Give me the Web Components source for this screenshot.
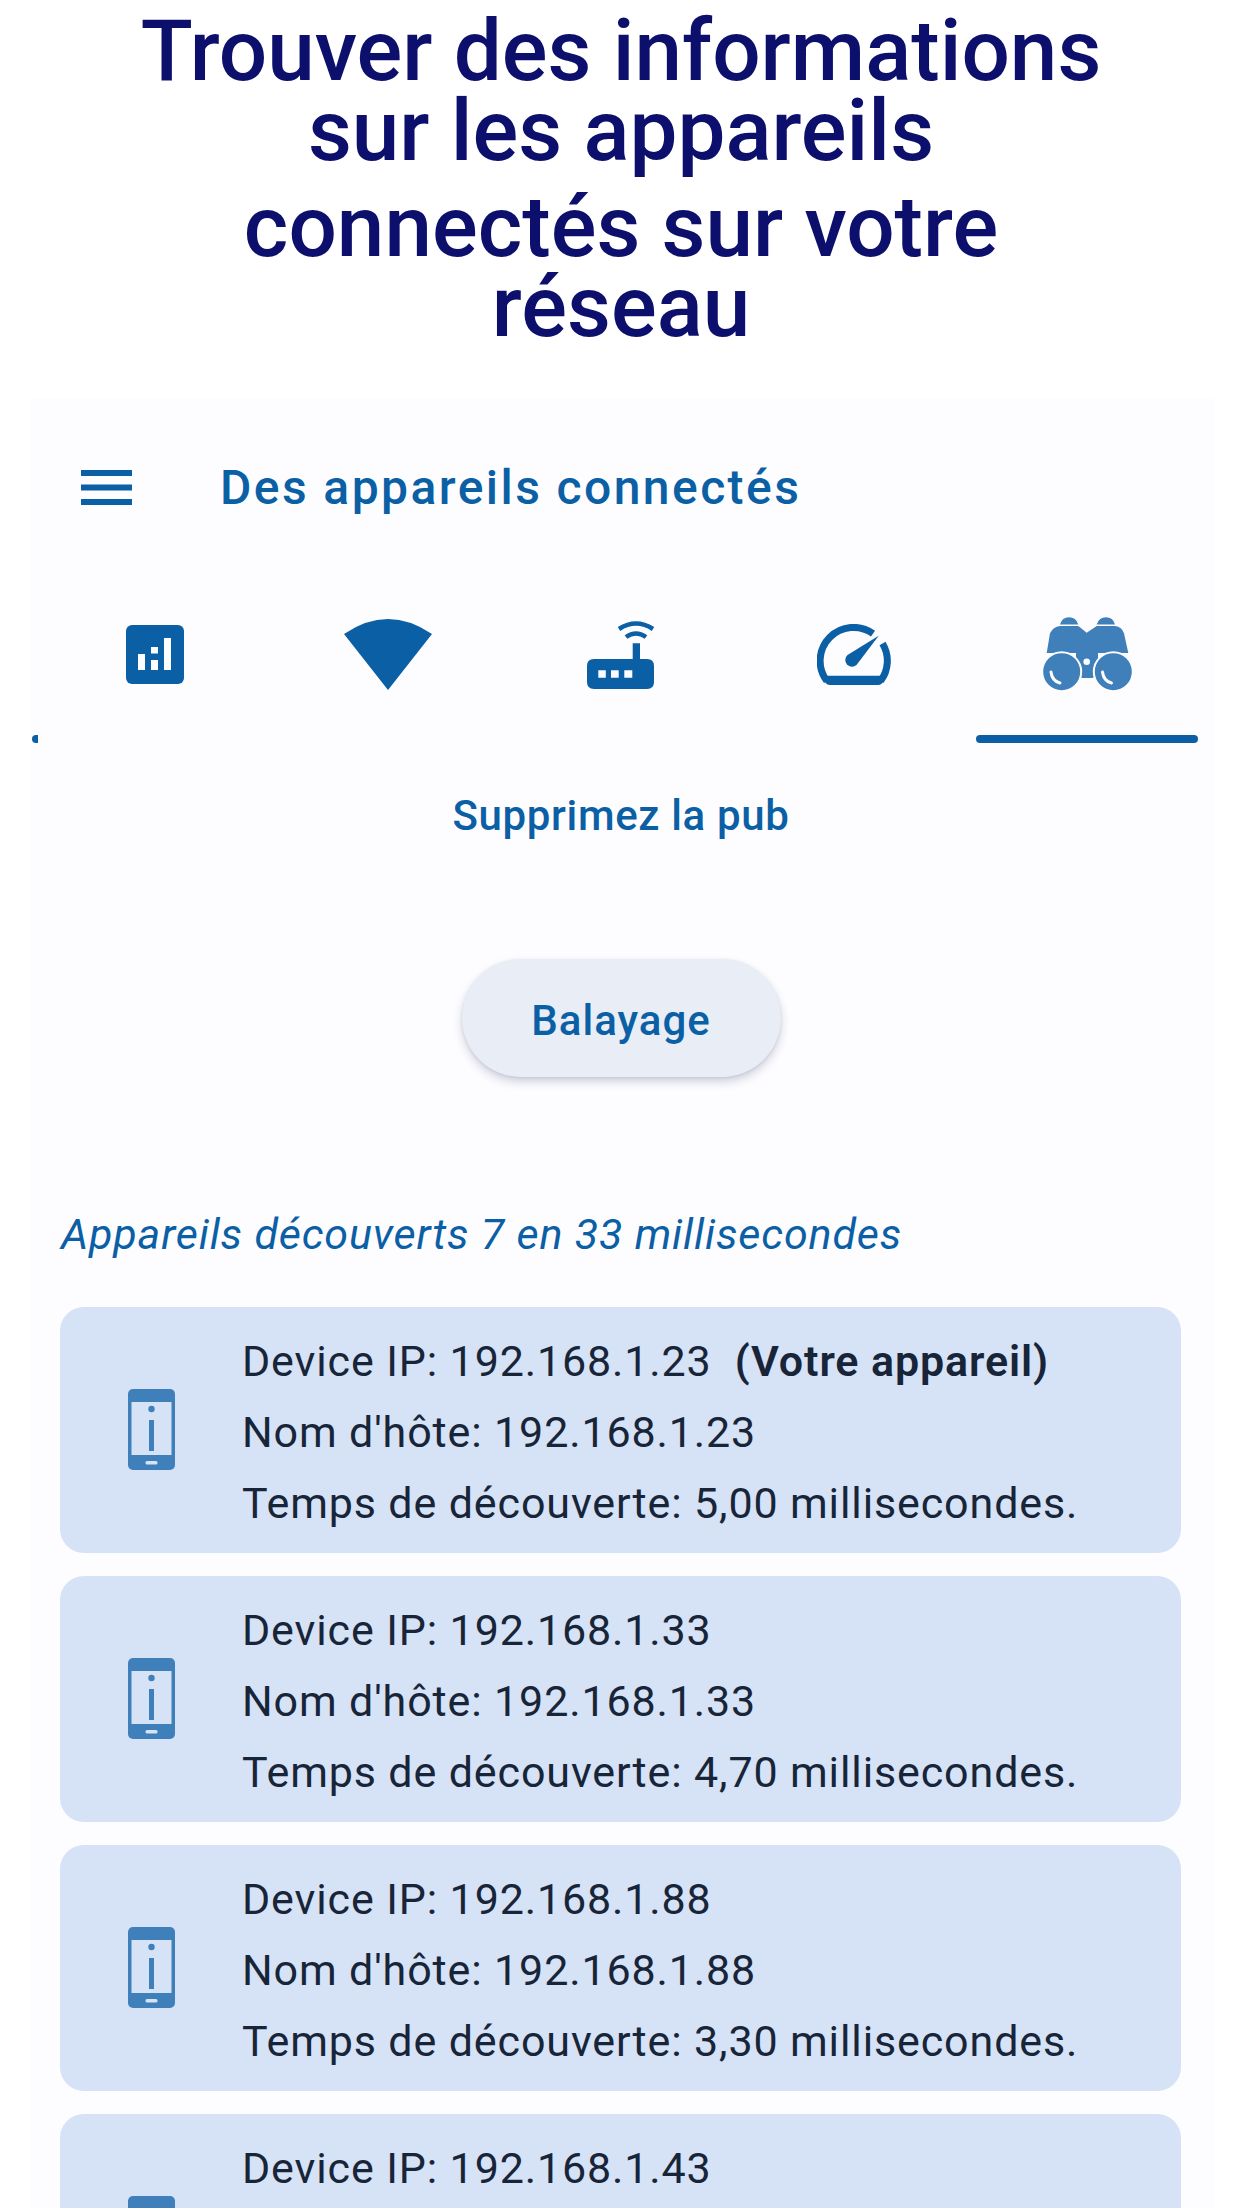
<!DOCTYPE html>
<html lang="fr">
<head>
<meta charset="utf-8">
<title>Des appareils connectés</title>
<style>
  html, body { margin: 0; padding: 0; background: #fff; }
  body { width: 1242px; height: 2208px; overflow: hidden; font-family: Roboto, sans-serif; }
</style>
</head>
<body>
<promo-title>
  <span>Trouver des informations<br>sur les appareils</span>
  <span>connectés sur votre<br>réseau</span>
</promo-title>
<app-panel>
  <app-header>Des appareils connectés</app-header>
  <tab-bar></tab-bar>
  <pub-link>Supprimez la pub</pub-link>
  <scan-button>Balayage</scan-button>
  <scan-summary>Appareils découverts 7 en 33 millisecondes</scan-summary>
  <device-card ip="192.168.1.23" host="192.168.1.23" time="5,00" self></device-card>
  <device-card ip="192.168.1.33" host="192.168.1.33" time="4,70"></device-card>
  <device-card ip="192.168.1.88" host="192.168.1.88" time="3,30"></device-card>
  <device-card ip="192.168.1.43"></device-card>
</app-panel>

<script>
const BLUE = "#0b5fa5";
const SOFT = "#3f80ba";
const PANEL = "#fdfcff";

class PromoTitle extends HTMLElement {
  constructor() {
    super();
    this.attachShadow({ mode: "open" }).innerHTML = `
      <style>
        :host {
          display: flex;
          flex-direction: column;
          align-items: center;
          gap: 16px;
          height: 398px;
          box-sizing: border-box;
          padding-top: 11px;
          font: 500 85.4px/80px Roboto, sans-serif;
          color: #0c0f6b;
          text-align: center;
        }
        ::slotted(span) { display: block; }
      </style>
      <slot></slot>`;
  }
}

class AppPanel extends HTMLElement {
  constructor() {
    super();
    this.attachShadow({ mode: "open" }).innerHTML = `
      <style>
        :host {
          display: block;
          margin: 0 28px 0 30px;
          height: 1810px;
          overflow: hidden;
          background: ${PANEL};
        }
      </style>
      <slot></slot>`;
  }
}

class AppHeader extends HTMLElement {
  constructor() {
    super();
    this.attachShadow({ mode: "open" }).innerHTML = `
      <style>
        :host {
          display: flex;
          align-items: center;
          height: 178px;
          padding-left: 51px;
          color: ${BLUE};
          font: 500 48px Roboto, sans-serif;
          letter-spacing: 2.42px;
        }
        svg { width: 51px; height: 35px; margin-right: 88px; flex: none; }
      </style>
      <svg viewBox="0 0 51 35"><path fill="${BLUE}" d="M0 0h51v6H0zM0 14.500h51v6H0zM0 29h51v6H0z"/></svg>
      <slot></slot>`;
  }
}

class TabBar extends HTMLElement {
  constructor() {
    super();
    const icons = [
      `<svg width="58" height="59" viewBox="0 0 58 59"><rect width="58" height="59" rx="6" fill="${BLUE}"/><path fill="${PANEL}" d="M12 29h7v16h-7zM25 22h7v6.500h-7zM25 35h7v10h-7zM38 13h7v32h-7z"/></svg>`,
      `<svg width="88" height="71" viewBox="0 0 88 71"><path fill="${BLUE}" d="M44 71 0 15Q44-15 88 15z"/></svg>`,
      `<svg width="68" height="68" viewBox="0 0 68 68"><path fill="${BLUE}" d="M7 38h38.700V22.300H53V38h7q7 0 7 7v16q0 7-7 7H7q-7 0-7-7V45q0-7 7-7z"/><path fill="${PANEL}" d="M11.300 49.300h7.500v7.500h-7.500zM24 49.300h7.700v7.500H24zM37.300 49.300h8v7.500h-8z"/><path fill="none" stroke="${BLUE}" stroke-width="4.500" d="M32 8q17-11 34 0M39 16q10-7 20 0"/></svg>`,
      `<svg width="74" height="61" viewBox="0 0 74 61"><path fill="none" stroke="${BLUE}" stroke-width="7" d="M9.800 57A33.500 33.500 0 0 1 56 9.600M65.500 19.500A33.500 33.500 0 0 1 63.600 57"/><path fill="${BLUE}" d="M7 51.700h60V55q-1 6-6.500 6h-47Q8 61 7 55z"/><path fill="${BLUE}" d="M61.700 11.700 39.500 41A6.700 6.700 0 0 1 30.500 31z"/></svg>`,
      `<svg width="91" height="75" viewBox="0 0 91 75"><g fill="${SOFT}"><path d="M18 7.500Q20 .3 27 .3T36.300 7.500zM54.700 7.500Q57 .3 64 .3T73 7.500z"/><path d="M4.700 36 8 16.300Q11 10 18 9h18.300l8.400 6.700L54.700 9H73q7 1 9 7.300L86.300 36z"/><path d="M34 36h22v23l-6 2H40l-6-2z"/></g><g fill="${SOFT}" stroke="${PANEL}" stroke-width="2"><circle cx="19.700" cy="54.700" r="19.500"/><circle cx="71.300" cy="54.700" r="19.500"/></g><circle cx="44.700" cy="44.700" r="3.300" fill="${PANEL}"/><path fill="none" stroke="${PANEL}" stroke-width="3" stroke-linecap="round" d="M9 55q1 9 9 11M60.500 55q1 9 9 11"/></svg>`
    ];
    this.attachShadow({ mode: "open" }).innerHTML = `
      <style>
        :host {
          display: grid;
          grid-template-columns: repeat(5, 233.2px);
          position: relative;
          margin-left: 8px;
          height: 167px;
        }
        .tab {
          display: flex;
          align-items: center;
          justify-content: center;
          box-sizing: border-box;
          padding-bottom: 10px;
          position: relative;
        }
        .on::after {
          content: "";
          position: absolute;
          left: 5px; right: 6px; bottom: 0;
          height: 8px;
          border-radius: 4px;
          background: ${BLUE};
        }
        .dot {
          position: absolute;
          left: -6px; bottom: 0;
          width: 6px; height: 8px;
          border-radius: 4px 0 0 4px;
          background: ${BLUE};
        }
      </style>
      ${icons.map((svg, i) => `<div class="tab ${i === 4 ? "on" : ""}">${svg}</div>`).join("")}
      <div class="dot"></div>`;
  }
}

class PubLink extends HTMLElement {
  constructor() {
    super();
    this.attachShadow({ mode: "open" }).innerHTML = `
      <style>
        :host {
          display: block;
          margin-top: 43px;
          padding-right: 2px;
          text-align: center;
          color: ${BLUE};
          font: 500 42px/60px Roboto, sans-serif;
          letter-spacing: 0.65px;
        }
      </style>
      <slot></slot>`;
  }
}

class ScanButton extends HTMLElement {
  constructor() {
    super();
    this.attachShadow({ mode: "open" }).innerHTML = `
      <style>
        :host { display: flex; justify-content: center; margin-top: 113px; padding-right: 2px; }
        button {
          width: 319px;
          height: 118px;
          border: 0;
          padding: 4px 0 0;
          border-radius: 59px;
          background: #e8edf6;
          color: ${BLUE};
          font: 500 42px Roboto, sans-serif;
          letter-spacing: 1px;
          box-shadow: 0 5px 10px rgba(30, 50, 90, 0.2), 0 1px 3px rgba(30, 50, 90, 0.1);
        }
      </style>
      <button><slot></slot></button>`;
  }
}

class ScanSummary extends HTMLElement {
  constructor() {
    super();
    this.attachShadow({ mode: "open" }).innerHTML = `
      <style>
        :host {
          display: block;
          margin: 129px 0 45px 31px;
          color: ${BLUE};
          font: italic 400 43px/56px Roboto, sans-serif;
          letter-spacing: 0.84px;
        }
      </style>
      <slot></slot>`;
  }
}

class DeviceCard extends HTMLElement {
  constructor() {
    super();
    const ip = this.getAttribute("ip");
    const host = this.getAttribute("host");
    const time = this.getAttribute("time");
    const self = this.hasAttribute("self") ? `&nbsp;<b>(Votre appareil)</b>` : "";
    this.attachShadow({ mode: "open" }).innerHTML = `
      <style>
        :host {
          display: flex;
          align-items: flex-start;
          width: 1121px;
          height: 246px;
          box-sizing: border-box;
          margin: 0 0 23px 30px;
          padding: 19px 0 0 68px;
          border-radius: 24px;
          background: #d6e2f6;
          color: #182538;
          font: 400 43px/71px Roboto, sans-serif;
          letter-spacing: 0.88px;
        }
        svg { margin: 63px 67px 0 0; flex: none; }
        p { margin: 0; white-space: nowrap; }
        b { font-weight: 600; }
      </style>
      <svg width="47" height="81" viewBox="0 0 47 81">
        <rect width="47" height="81" rx="5" fill="${SOFT}"/>
        <rect x="3.500" y="13" width="40" height="53" fill="#d6e2f6"/>
        <circle cx="23.500" cy="20" r="3.200" fill="${SOFT}"/>
        <rect x="21" y="31" width="5" height="31" fill="${SOFT}"/>
        <rect x="17.500" y="72" width="12" height="3.500" rx="1.500" fill="#d6e2f6"/>
      </svg>
      <div>
        <p>Device IP: ${ip} ${self}</p>
        ${host ? `<p>Nom d'hôte: ${host}</p>` : ""}
        ${time ? `<p>Temps de découverte: ${time} millisecondes.</p>` : ""}
      </div>`;
  }
}

customElements.define("promo-title", PromoTitle);
customElements.define("app-panel", AppPanel);
customElements.define("app-header", AppHeader);
customElements.define("tab-bar", TabBar);
customElements.define("pub-link", PubLink);
customElements.define("scan-button", ScanButton);
customElements.define("scan-summary", ScanSummary);
customElements.define("device-card", DeviceCard);
</script>
</body>
</html>
